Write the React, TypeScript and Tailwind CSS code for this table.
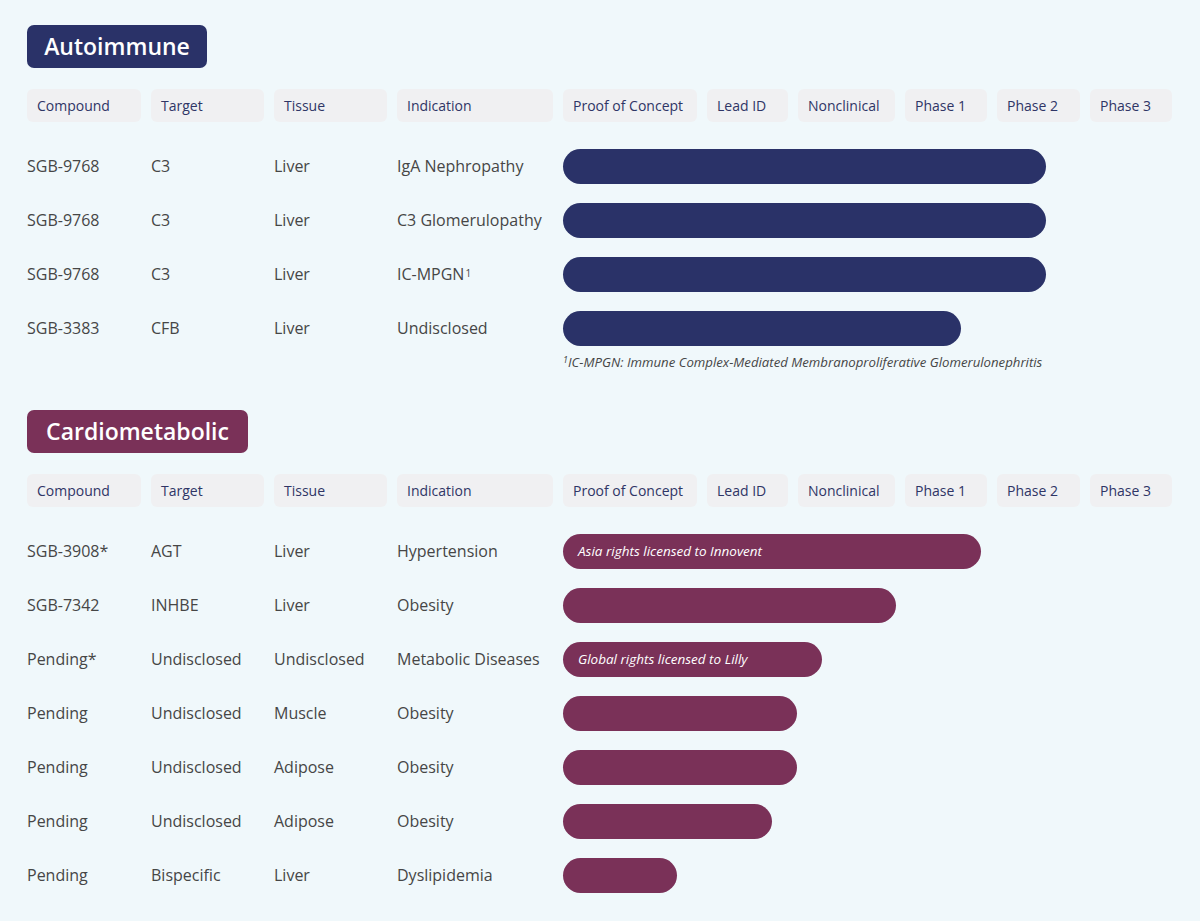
import React from "react";

type Row = {
  compound: string;
  target: string;
  tissue: string;
  indication: React.ReactNode;
  bar: string;
  note?: string;
};

const columns = [
  "Compound",
  "Target",
  "Tissue",
  "Indication",
  "Proof of Concept",
  "Lead ID",
  "Nonclinical",
  "Phase 1",
  "Phase 2",
  "Phase 3",
];

const grid =
  "grid grid-cols-[114px_113px_113px_156px_134px_81px_97px_82px_83px_82px] gap-x-[10px]";

const autoimmune: Row[] = [
  { compound: "SGB-9768", target: "C3", tissue: "Liver", indication: "IgA Nephropathy", bar: "w-[483px]" },
  { compound: "SGB-9768", target: "C3", tissue: "Liver", indication: "C3 Glomerulopathy", bar: "w-[483px]" },
  {
    compound: "SGB-9768",
    target: "C3",
    tissue: "Liver",
    indication: (
      <>
        IC-MPGN<sup className="relative -top-[3px] ml-[1px] text-[10px]">1</sup>
      </>
    ),
    bar: "w-[483px]",
  },
  { compound: "SGB-3383", target: "CFB", tissue: "Liver", indication: "Undisclosed", bar: "w-[398px]" },
];

const cardiometabolic: Row[] = [
  {
    compound: "SGB-3908*",
    target: "AGT",
    tissue: "Liver",
    indication: "Hypertension",
    bar: "w-[418px]",
    note: "Asia rights licensed to Innovent",
  },
  { compound: "SGB-7342", target: "INHBE", tissue: "Liver", indication: "Obesity", bar: "w-[333px]" },
  {
    compound: "Pending*",
    target: "Undisclosed",
    tissue: "Undisclosed",
    indication: "Metabolic Diseases",
    bar: "w-[259px]",
    note: "Global rights licensed to Lilly",
  },
  { compound: "Pending", target: "Undisclosed", tissue: "Muscle", indication: "Obesity", bar: "w-[234px]" },
  { compound: "Pending", target: "Undisclosed", tissue: "Adipose", indication: "Obesity", bar: "w-[234px]" },
  { compound: "Pending", target: "Undisclosed", tissue: "Adipose", indication: "Obesity", bar: "w-[209px]" },
  { compound: "Pending", target: "Bispecific", tissue: "Liver", indication: "Dyslipidemia", bar: "w-[114px]" },
];

function HeaderRow() {
  return (
    <div className={`${grid} mt-[21px]`}>
      {columns.map((c) => (
        <div
          key={c}
          className="flex h-[33px] items-center rounded-[6px] bg-[#f0f0f2] px-[10px] text-[14px] text-[#2f3566]"
        >
          {c}
        </div>
      ))}
    </div>
  );
}

function Section({
  title,
  badge,
  barColor,
  rows,
  footnote,
}: {
  title: string;
  badge: string;
  barColor: string;
  rows: Row[];
  footnote?: string;
}) {
  return (
    <section>
      <div
        className={`flex h-[43px] items-center justify-center rounded-[7px] text-[23px] font-semibold text-white ${badge}`}
      >
        {title}
      </div>
      <HeaderRow />
      <div className="mt-[17px]">
        {rows.map((r, i) => (
          <div key={i} className={`${grid} h-[54px] items-center text-[16px] text-[#464646]`}>
            <div>{r.compound}</div>
            <div>{r.target}</div>
            <div>{r.tissue}</div>
            <div>{r.indication}</div>
            <div className="col-span-6">
              <div
                className={`flex h-[35px] items-center rounded-full px-[15px] text-[13.5px] italic text-white ${barColor} ${r.bar}`}
              >
                {r.note}
              </div>
            </div>
          </div>
        ))}
        {footnote && (
          <div className={grid}>
            <p className="col-span-6 col-start-5 -mt-[2px] text-[13.2px] leading-[18px] italic text-[#464646]">
              <sup className="text-[9px]">1</sup>
              {footnote}
            </p>
          </div>
        )}
      </div>
    </section>
  );
}

export default function App() {
  return (
    <div className="min-h-screen bg-[#f0f8fb] pl-[27px] pt-[25px] font-['Open_Sans',sans-serif]">
      <Section
        title="Autoimmune"
        badge="w-[180px] bg-[#2a3268]"
        barColor="bg-[#2a3268]"
        rows={autoimmune}
        footnote="IC-MPGN: Immune Complex-Mediated Membranoproliferative Glomerulonephritis"
      />
      <div className="mt-[39px]">
        <Section
          title="Cardiometabolic"
          badge="w-[221px] bg-[#7a3158]"
          barColor="bg-[#7a3158]"
          rows={cardiometabolic}
        />
      </div>
    </div>
  );
}
